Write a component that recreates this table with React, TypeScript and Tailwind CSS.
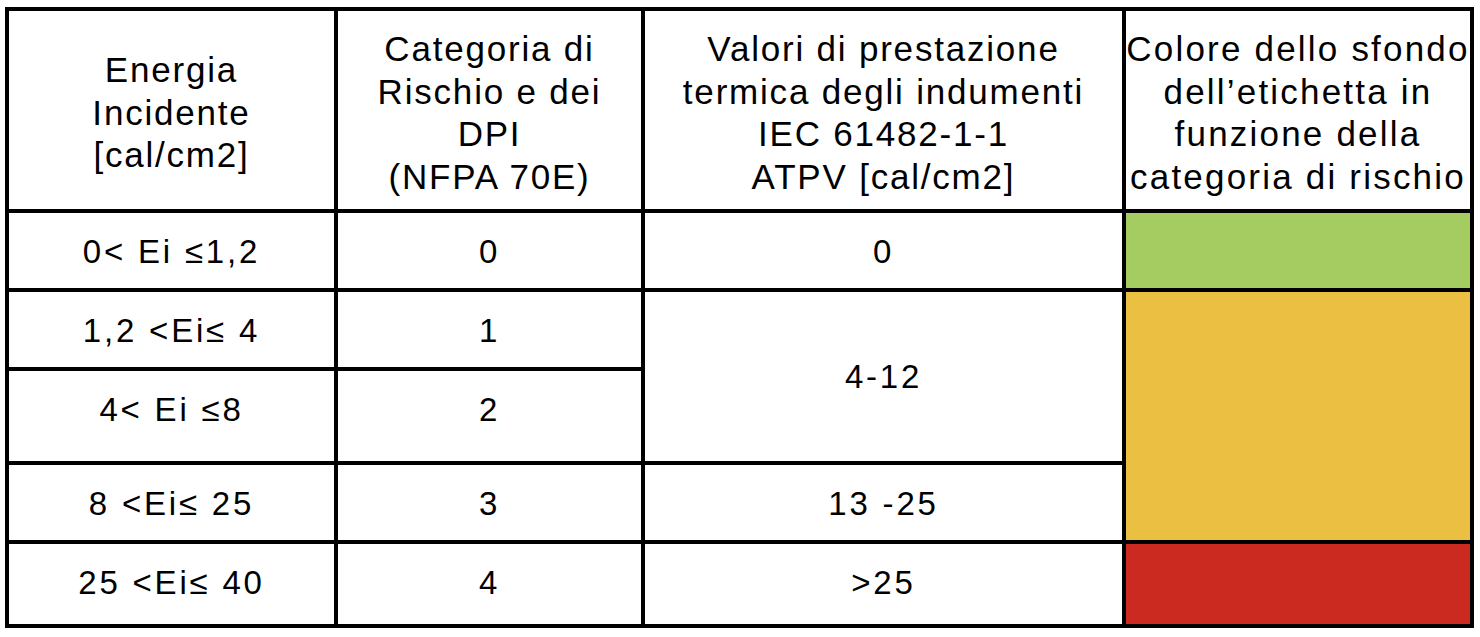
import React from "react";

const cell =
  "border-r-4 border-b-4 border-black flex justify-center text-center whitespace-nowrap";

const head = `${cell} items-center text-[35px] leading-[42.5px] tracking-[1.8px] pt-[6px]`;
const body = `${cell} items-start pt-[19px] text-[33px] leading-[40px] tracking-[2.8px]`;

export default function App() {
  return (
    <div
      className="w-[1480px] h-[637px] bg-white text-black pt-[7px] pl-[5px]"
      style={{ fontFamily: '"Liberation Sans", Arial, sans-serif' }}
    >
      <div className="grid grid-cols-[329px_307px_481px_348px] grid-rows-[202px_79px_79px_94px_79px_84px] border-l-4 border-t-4 border-black w-max">
        {/* Header */}
        <div className={`${head} pt-0`}>
          <div>
            Energia
            <br />
            Incidente
            <br />
            [cal/cm2]
          </div>
        </div>
        <div className={head}>
          <div>
            Categoria di
            <br />
            Rischio e dei
            <br />
            DPI
            <br />
            (NFPA 70E)
          </div>
        </div>
        <div className={head}>
          <div>
            Valori di prestazione
            <br />
            termica degli indumenti
            <br />
            IEC 61482-1-1
            <br />
            ATPV [cal/cm2]
          </div>
        </div>
        <div className={`${head} tracking-[2.2px]`}>
          <div>
            Colore dello sfondo
            <br />
            dell’etichetta in
            <br />
            funzione della
            <br />
            categoria di rischio
          </div>
        </div>

        {/* Row 1 */}
        <div className={body}>0&lt; Ei ≤1,2</div>
        <div className={body}>0</div>
        <div className={body}>0</div>
        <div className="border-r-4 border-b-4 border-black bg-[#a4cc61]" />

        {/* Row 2 */}
        <div className={body}>1,2 &lt;Ei≤ 4</div>
        <div className={body}>1</div>
        <div
          className={`${cell} row-span-2 items-center text-[33px] leading-[40px] tracking-[2.8px]`}
        >
          4-12
        </div>
        <div className="row-span-3 border-r-4 border-b-4 border-black bg-[#ebc042]" />

        {/* Row 3 */}
        <div className={body}>4&lt; Ei ≤8</div>
        <div className={body}>2</div>

        {/* Row 4 */}
        <div className={body}>8 &lt;Ei≤ 25</div>
        <div className={body}>3</div>
        <div className={body}>13 -25</div>

        {/* Row 5 */}
        <div className={body}>25 &lt;Ei≤ 40</div>
        <div className={body}>4</div>
        <div className={body}>&gt;25</div>
        <div className="border-r-4 border-b-4 border-black bg-[#ca2a1f]" />
      </div>
    </div>
  );
}
